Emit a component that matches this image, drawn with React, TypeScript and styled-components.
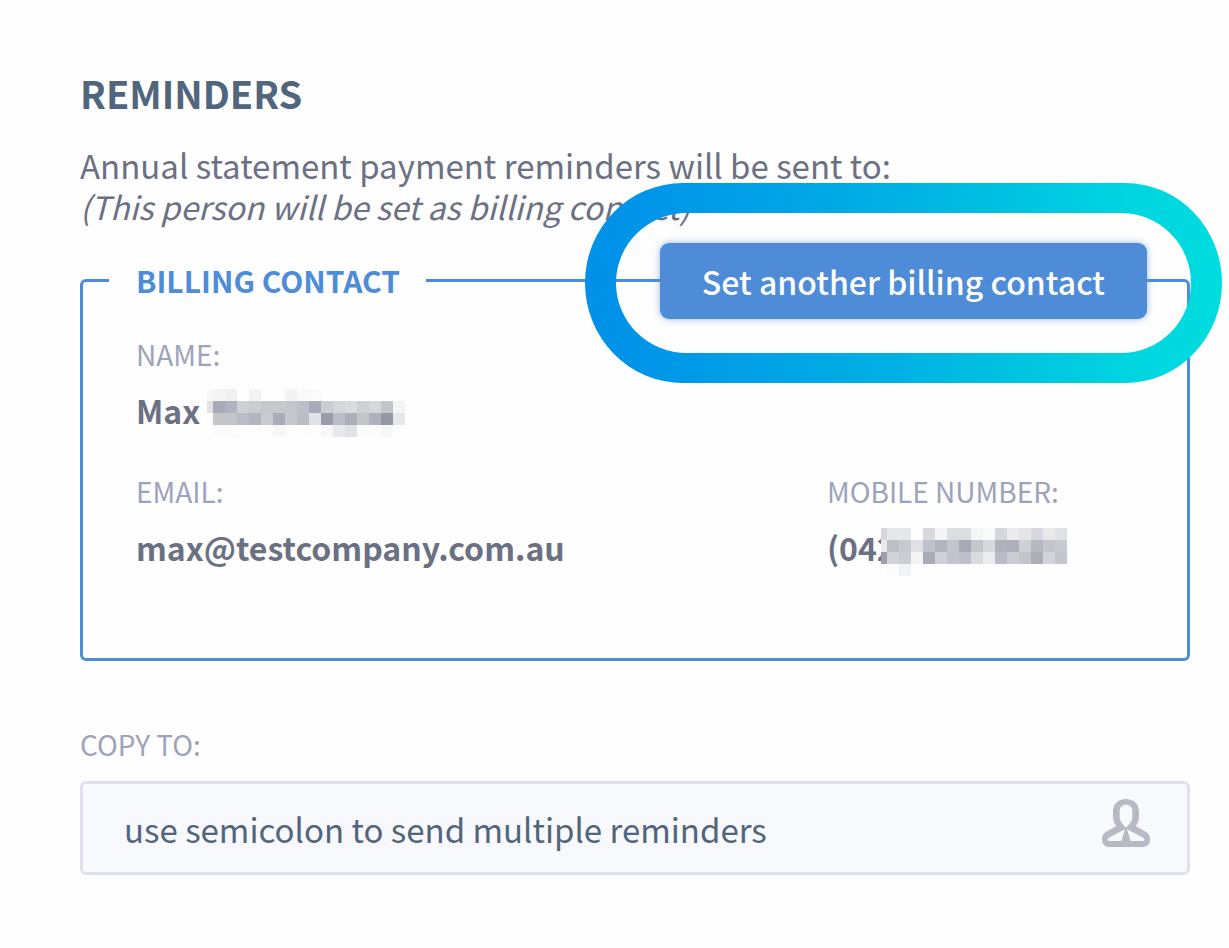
import React from "react";
import styled, { createGlobalStyle } from "styled-components";

const blue = "#4e8cd8";

const GlobalStyle = createGlobalStyle`
  *, *::before, *::after { box-sizing: border-box; }
  body {
    margin: 0;
    background: #fefefe;
    color: #6c7083;
    font-family: "Noto Sans CJK SC", "Noto Sans", sans-serif;
    font-size: 33px;
    line-height: 41px;
    overflow-x: hidden;
  }
`;

const Page = styled.main`
  padding: 67px 39px 72px 80px;
`;

const Heading = styled.h1`
  margin: 0 0 26px;
  font-size: 38px;
  line-height: 52px;
  font-weight: 700;
  color: #51657c;
`;

const Intro = styled.p`
  margin: 0;
`;

const Hint = styled.em`
  display: block;
  font-size: 32px;
`;

const ContactArea = styled.section`
  position: relative;
  margin-top: 33px;
`;

const ContactBox = styled.fieldset`
  min-width: 0;
  margin: 0;
  padding: 34px 28px 82px 53px;
  border: 3px solid ${blue};
  border-radius: 6px;
`;

const Legend = styled.legend`
  margin-left: -27px;
  padding: 0 26px 0 27px;
  font-size: 30px;
  line-height: 40px;
  font-weight: 700;
  color: ${blue};
`;

const Details = styled.dl`
  display: grid;
  grid-template-columns: 2fr 1fr;
  gap: 34px 27px;
  margin: 0;
`;

const Detail = styled.div<{ $wide?: boolean }>`
  grid-column: ${(p) => (p.$wide ? "1 / -1" : "auto")};
`;

const Term = styled.dt`
  font-size: 28px;
  line-height: 40px;
  color: #9da3bc;
`;

const Value = styled.dd`
  display: flex;
  align-items: flex-start;
  margin: 15px 0 0;
  font-size: 32px;
  font-weight: 700;
  line-height: 42px;
  white-space: nowrap;
`;

const Redaction = styled.svg<{ $overlap?: boolean }>`
  display: block;
  flex: none;
  margin: ${(p) => (p.$overlap ? "2px 0 0 -15px" : "0 0 0 7px")};
`;

const Action = styled.div`
  position: absolute;
  top: -17px;
  right: 43px;
`;

const ActionButton = styled.button`
  display: block;
  height: 76px;
  padding: 0 42px;
  border: 0;
  border-radius: 9px;
  background: ${blue};
  box-shadow: 0 0 7px rgba(78, 140, 216, 0.6);
  color: #fff;
  font: inherit;
  font-size: 32px;
  font-weight: 500;
  white-space: nowrap;
  cursor: pointer;
`;

const Highlight = styled.svg`
  position: absolute;
  top: -60px;
  right: -75px;
  pointer-events: none;
`;

const CopyLabel = styled.label`
  display: block;
  margin-top: 63px;
  font-size: 28px;
  line-height: 40px;
  color: #9da3bc;
`;

const Field = styled.div`
  display: flex;
  align-items: center;
  height: 94px;
  margin-top: 17px;
  padding: 0 37px 0 41px;
  border: 3px solid #e0e1ec;
  border-radius: 6px;
  background: #f8f9fd;
`;

const CopyInput = styled.input`
  flex: 1;
  min-width: 0;
  height: 100%;
  padding: 2px 0 0;
  border: 0;
  outline: 0;
  background: transparent;
  color: #51657c;
  font: inherit;
  &::placeholder {
    color: #51657c;
    opacity: 1;
  }
`;

const PersonSvg = styled.svg`
  display: block;
  flex: none;
  margin-bottom: 10px;
`;

const nameCells = [
  ["f8f8f9", "f5f5f6", "f0f0f1", "fefefe", "f1f3f5", "fefefe", "fdfdfe", "f3f3f4", "fafafa", "fbfbfb", "fefefe", "fefefe", "fefefe", "fefefe", "fefefe", "fefefe", "fefefe"],
  ["e0e1e5", "a8abb7", "b1b4bf", "cfd0d4", "cccdd2", "c7c8cd", "c7c8cd", "c5c6cb", "bdbec9", "a8aab7", "cccdd2", "d5d6db", "dadbdf", "cfd0d4", "d6d7dc", "c4c5cb", "f4f4f5"],
  ["fefefe", "c5c6cb", "c5c6cb", "babdc8", "b2b5bf", "cacbd0", "a9acb8", "c7c8ce", "babdc7", "e1e2e7", "9a9ba9", "babdc7", "acafb9", "c5c6cb", "afb2bc", "9798a6", "e7e8eb"],
  ["fefefe", "fbfbfb", "fbfbfb", "fcfcfc", "fcfcfc", "fcfcfc", "f7f7f8", "fcfcfc", "fcfcfc", "fefefe", "f8f8f9", "e8e9ec", "e1e2e6", "fbfbfb", "fbfbfb", "f5f7f9", "fefefe"],
];

const mobileCells = [
  ["d5d6db", "e8e8ea", "e6e7e9", "fdfdfd", "d7d8de", "f5f5f6", "dddee3", "dddee3", "f6f6f7", "f8f9f9", "d5d7dc", "ebebed", "e5e5e8", "d8d9e0", "e9e9eb", "e1e2e7"],
  ["e9e9eb", "bcbfc8", "c8c9ce", "e0e0e6", "bec1cb", "b2b5bf", "c4c4cf", "a8abb5", "c6c7cc", "d8d9de", "afb2bb", "adb0ba", "cfd0d5", "b5b9c2", "c4c5ca", "c9cacf"],
  ["9d9eac", "d2d3d8", "cccdd2", "f4f4f5", "a9acb7", "cfd0d5", "c3c3cf", "bdc0ca", "dadbdf", "ebecee", "b8bbc5", "cbccd1", "c4c5ca", "abaeb9", "d3d3da", "c5c5d0"],
  ["fefefe", "fcfcfc", "f1f2f5", "fefefe", "fefefe", "fefefe", "fefefe", "fefefe", "fefefe", "fefefe", "fefefe", "fefefe", "fefefe", "fefefe", "fefefe", "fefefe"],
];

/* Pixelated cover for private details: 12px cells with a half-width first column. */
function Redacted({ cells, label, overlap }: { cells: string[][]; label: string; overlap?: boolean }) {
  const width = cells[0].length * 12 - 6;
  return (
    <Redaction $overlap={overlap} width={width} height={48} shapeRendering="crispEdges" role="img" aria-label={label}>
      {cells.map((row, y) =>
        row.map((fill, x) => (
          <rect key={`${x}-${y}`} x={x === 0 ? 0 : x * 12 - 6} y={y * 12} width={x === 0 ? 6 : 12} height={12} fill={`#${fill}`} />
        ))
      )}
    </Redaction>
  );
}

function PersonIcon() {
  return (
    <PersonSvg width="48" height="48" viewBox="66 87 144 144" fill="#b7bac4" fillRule="evenodd" aria-hidden="true">
      <path
        d="M138 87C158 87 177 99 177 124V140C177 152 173 160 167 168L195 184C205 190 210 197 210 208Q210 231 188 231H88Q66 231 66 208C66 197 71 190 81 184L109 168C103 160 99 152 99 140V124C99 99 118 87 138 87Z
        M138 104C126 104 119 111 119 124V141C119 153 128 162 138 173C148 162 157 153 157 141V124C157 111 150 104 138 104Z
        M135 178L124 213H88Q83 213 83 208C83 204 86 203 92 200Z
        M141 178L152 213H188Q193 213 193 208C193 204 190 203 184 200Z"
      />
    </PersonSvg>
  );
}

export default function App() {
  return (
    <>
      <GlobalStyle />
      <Page>
        <Heading>REMINDERS</Heading>
        <Intro>
          Annual statement payment reminders will be sent to:
          <Hint>(This person will be set as billing contact)</Hint>
        </Intro>

        <ContactArea>
          <ContactBox>
            <Legend>BILLING CONTACT</Legend>
            <Details>
              <Detail $wide>
                <Term>NAME:</Term>
                <Value>
                  Max
                  <Redacted cells={nameCells} label="Surname hidden" />
                </Value>
              </Detail>
              <Detail>
                <Term>EMAIL:</Term>
                <Value>max@testcompany.com.au</Value>
              </Detail>
              <Detail>
                <Term>MOBILE NUMBER:</Term>
                <Value>
                  (042
                  <Redacted cells={mobileCells} label="Number hidden" overlap />
                </Value>
              </Detail>
            </Details>
          </ContactBox>
          <Action>
            <ActionButton type="button">Set another billing contact</ActionButton>
            <Highlight width="637" height="200" viewBox="0 0 637 200" aria-hidden="true">
              <defs>
                <linearGradient id="ring" x1="0" y1="0" x2="1" y2="0">
                  <stop offset="0" stopColor="#0090e9" />
                  <stop offset="0.15" stopColor="#0098e8" />
                  <stop offset="0.5" stopColor="#00b2e4" />
                  <stop offset="0.85" stopColor="#00d4e0" />
                  <stop offset="1" stopColor="#00dddf" />
                </linearGradient>
              </defs>
              <path
                fill="url(#ring)"
                fillRule="evenodd"
                d="M98 0H540A97 100 0 0 1 540 200H98A98 100 0 0 1 98 0ZM102 30A71 70 0 0 0 102 170H536A70 70 0 0 0 536 30Z"
              />
            </Highlight>
          </Action>
        </ContactArea>

        <CopyLabel htmlFor="copy-to">COPY TO:</CopyLabel>
        <Field>
          <CopyInput id="copy-to" type="text" placeholder="use semicolon to send multiple reminders" />
          <PersonIcon />
        </Field>
      </Page>
    </>
  );
}
